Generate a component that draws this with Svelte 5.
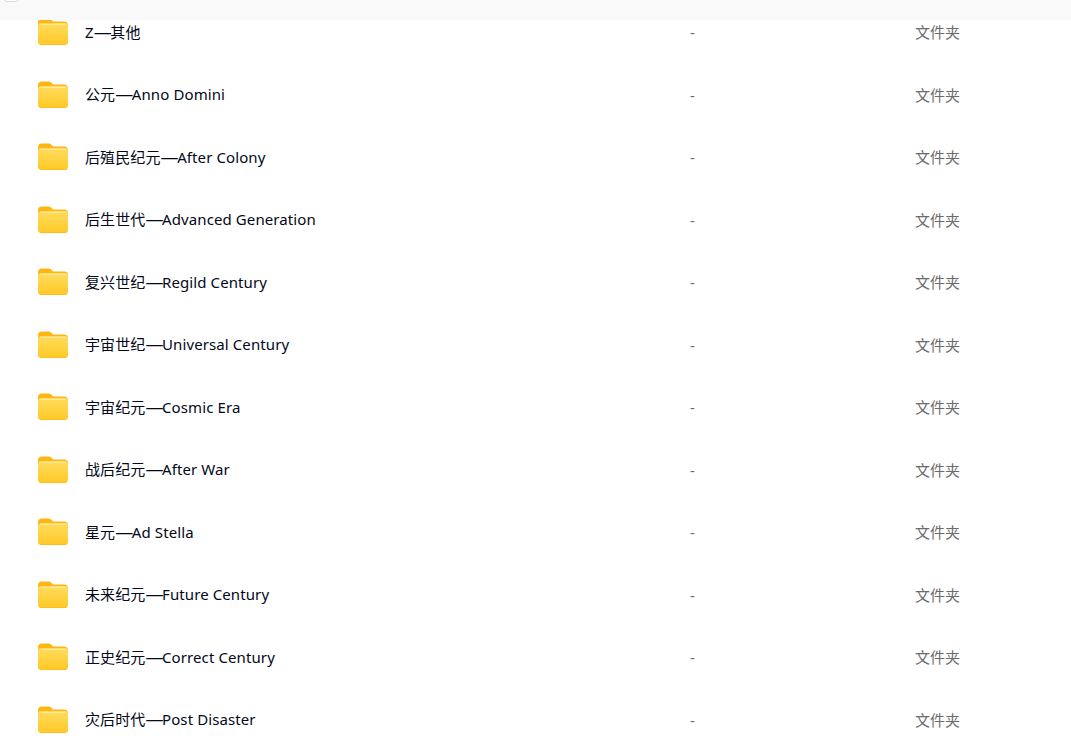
<script>
  const folders = [
    ['Z', '其他'],
    ['公元', 'Anno Domini'],
    ['后殖民纪元', 'After Colony'],
    ['后生世代', 'Advanced Generation'],
    ['复兴世纪', 'Regild Century'],
    ['宇宙世纪', 'Universal Century'],
    ['宇宙纪元', 'Cosmic Era'],
    ['战后纪元', 'After War'],
    ['星元', 'Ad Stella'],
    ['未来纪元', 'Future Century'],
    ['正史纪元', 'Correct Century'],
    ['灾后时代', 'Post Disaster']
  ];
</script>

<div class="page">
  <div class="table-head">
    <span class="check"></span>
  </div>
  <ul class="list">
    {#each folders as [first, second]}
      <li class="row">
        <svg class="folder" viewBox="0 0 30 27" width="30" height="27">
          <path d="M0 4.500C0 2 1.600.5 3.500.5h6.800c1.500 0 2.300.5 3.300 1.500l1.400 1.400h11.500C28.500 3.400 30 5 30 7v5H0z" fill="#ffb612" />
          <path d="M0 8c0-2 1.500-3 3-3h24c1.500 0 3 1 3 3v16c0 1.700-1.300 3-3 3H3c-1.700 0-3-1.300-3-3z" fill="url(#body)" />
          <path d="M2 6.400h26" stroke="#ffe9a0" stroke-width="1" />
          <path d="M2 26.500h26" stroke="#ffbe1c" stroke-width="1" />
          <defs>
            <linearGradient id="body" x1="0" y1="0" x2="0" y2="1">
              <stop offset="0" stop-color="#ffdc5e" />
              <stop offset="1" stop-color="#ffc926" />
            </linearGradient>
          </defs>
        </svg>
        <span class="name">{first}<span class="dash">—</span>{second}</span>
        <span class="size">-</span>
        <span class="kind">文件夹</span>
      </li>
    {/each}
  </ul>
</div>

<style>
  :global(body) {
    margin: 0;
    background: #fff;
    overflow: hidden;
  }

  .page {
    position: relative;
    height: 745px;
    overflow: hidden;
    font-family: "Noto Sans", "Noto Sans CJK SC", sans-serif;
    font-size: 15px;
    line-height: 20px;
  }

  .table-head {
    position: absolute;
    top: 0;
    left: 0;
    right: 0;
    height: 20px;
    background: #f9f9f9;
  }

  .check {
    position: absolute;
    left: 4px;
    top: -13px;
    width: 13px;
    height: 13px;
    border: 1px solid #d9d9d9;
    border-radius: 3px;
    background: #fff;
  }

  .list {
    list-style: none;
    margin: 0;
    padding: 0.5px 0 0 38px;
  }

  .row {
    display: grid;
    grid-template-columns: 47px 604px 226px 1fr;
    align-items: center;
    height: 62.5px;
  }

  .folder {
    display: block;
  }

  .name {
    color: #03081a;
    letter-spacing: 0.1px;
  }

  .dash {
    display: inline-block;
    width: 18px;
    margin-right: -1.400px;
    font-size: 18px;
    line-height: 20px;
    letter-spacing: 0;
    vertical-align: top;
  }

  .size,
  .kind {
    padding-top: 1px;
    color: #6b6b6b;
  }

  .size {
    padding-left: 1px;
  }
</style>
